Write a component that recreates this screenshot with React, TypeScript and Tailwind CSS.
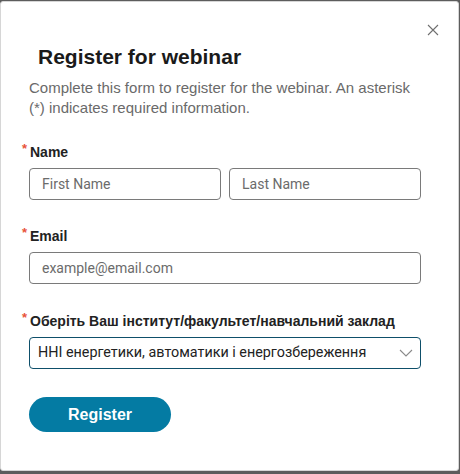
import React from 'react';

const RequiredLabel: React.FC<{ text: string }> = ({ text }) => (
  <div className="flex items-start pl-[21px] font-['Liberation_Sans',sans-serif] text-[14px] font-bold leading-[20px] text-[#222]">
    <span className="w-[8px] text-[13px] leading-[14px] text-[#e8533a]">*</span>
    <span>{text}</span>
  </div>
);

const inputCls =
  'h-[32px] rounded-[4px] border border-[#7a7a7a] bg-white px-[12px] text-[14px] text-[#222] placeholder:text-[#6b6b6b] outline-none';

export default function App() {
  return (
    <div className="h-[474px] w-[460px] bg-[#5c5c5c] pt-[1px] font-['Roboto',sans-serif]">
      <div className="relative h-[470px] w-[459px] rounded-[3px] border border-[#d6d6d6] bg-white">
        {/* close button */}
        <button className="absolute right-[19px] top-[22px] text-[#6f6f6f]">
          <svg width="12" height="12" viewBox="0 0 12 12" fill="none" stroke="currentColor" strokeWidth="1.1">
            <path d="M1 1l10 10M11 1L1 11" />
          </svg>
        </button>

        <h2 className="pl-[37px] pt-[42px] font-['Liberation_Sans',sans-serif] text-[21px] font-bold leading-[26px] text-[#1a1a1a]">
          Register for webinar
        </h2>
        <p className="mt-[8px] w-[420px] pl-[28px] font-['Liberation_Sans',sans-serif] text-[15px] leading-[20px] text-[#6a6a6a]">
          Complete this form to register for the webinar. An asterisk (*) indicates required information.
        </p>

        <div className="mt-[24px]">
          <RequiredLabel text="Name" />
          <div className="ml-[28px] mt-[6px] flex w-[392px] gap-[8px]">
            <input className={`${inputCls} w-[192px]`} placeholder="First Name" />
            <input className={`${inputCls} w-[192px]`} placeholder="Last Name" />
          </div>
        </div>

        <div className="mt-[26px]">
          <RequiredLabel text="Email" />
          <div className="ml-[28px] mt-[6px]">
            <input className={`${inputCls} w-[392px]`} placeholder="example@email.com" />
          </div>
        </div>

        <div className="mt-[27px]">
          <RequiredLabel text="Оберіть Ваш інститут/факультет/навчальний заклад" />
          <div className="relative ml-[28px] mt-[6px] flex h-[32px] w-[392px] items-center rounded-[4px] border border-[#0e4f6a] pl-[8px] text-[14.35px] text-[#222]">
            <span>ННІ енергетики, автоматики і енергозбереження</span>
            <svg className="absolute right-[7px] top-[11px]" width="14" height="8" viewBox="0 0 14 8" fill="none" stroke="#8a8a8a" strokeWidth="1.1">
              <path d="M1 1l6 6 6-6" />
            </svg>
          </div>
        </div>

        <button className="ml-[28px] mt-[28px] h-[35px] w-[142px] rounded-full bg-[#047ba3] font-['Liberation_Sans',sans-serif] text-[16px] font-bold text-white">
          Register
        </button>
      </div>
    </div>
  );
}
